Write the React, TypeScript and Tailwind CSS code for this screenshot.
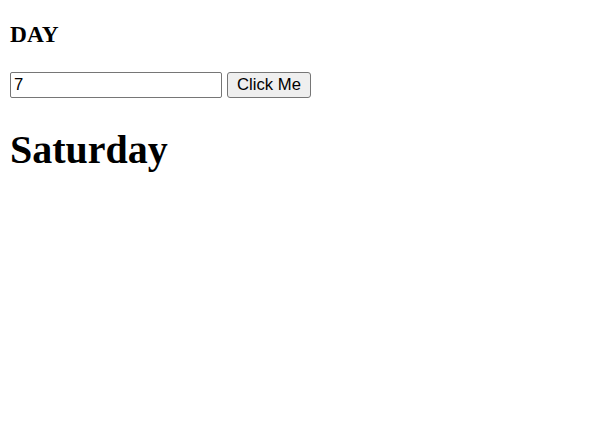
import { useState } from 'react';

const days = ['', 'Sunday', 'Monday', 'Tuesday', 'Wednesday', 'Thursday', 'Friday', 'Saturday'];

export default function App() {
  const [value, setValue] = useState('7');
  const [day, setDay] = useState('Saturday');

  return (
    <div className="min-h-screen bg-white p-[10px] text-black font-['Liberation_Serif',serif]">
      <h3 className="mt-[11px] text-[23.4px] font-bold leading-[26px]">DAY</h3>

      <div className="mt-[25px] flex items-center gap-[5px]">
        <input
          value={value}
          onChange={(e) => setValue(e.target.value)}
          className="h-[26px] w-[212px] rounded-[2px] border border-[#767676] bg-white px-[3px] text-[16.67px] leading-none font-['Liberation_Sans',Arial,sans-serif] outline-none"
        />
        <button
          onClick={() => setDay(days[Number(value)] || '')}
          className="h-[26px] w-[84px] rounded-[3px] border border-[#767676] bg-[#efefef] text-center text-[16.67px] leading-none font-['Liberation_Sans',Arial,sans-serif]"
        >
          Click Me
        </button>
      </div>

      <h1 className="mt-[22px] text-[40px] font-bold leading-normal">{day}</h1>
    </div>
  );
}
